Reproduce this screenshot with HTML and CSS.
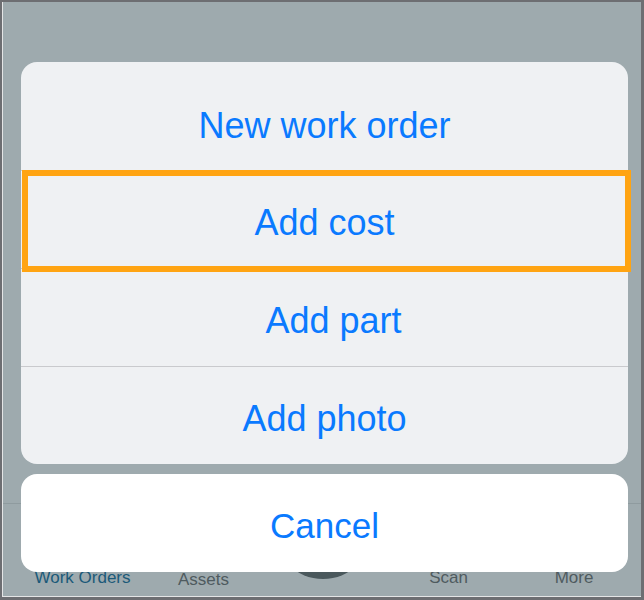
FILE: index.html
```html
<!DOCTYPE html>
<html>
<head>
<meta charset="utf-8">
<link rel="stylesheet" href="styles.css">
</head>
<body>
<div class="screen">
  <div class="content"></div>
  <nav class="tabbar">
    <span class="tab tab-active">Work Orders</span>
    <span class="tab tab-low">Assets</span>
    <span class="tab-circle"></span>
    <span class="tab">Scan</span>
    <span class="tab">More</span>
  </nav>
  <div class="overlay">
    <div class="sheet">
      <div class="row row-first">New work order</div>
      <div class="row">Add cost</div>
      <div class="row row-shift">Add part</div>
      <div class="row">Add photo</div>
      <div class="focus"></div>
    </div>
    <div class="cancel">Cancel</div>
  </div>
</div>
</body>
</html>
```
FILE: styles.css
```css
html, body {
  margin: 0;
  padding: 0;
  background: #6d6e72;
  width: 644px;
  height: 600px;
  overflow: hidden;
  font-family: "Liberation Sans", Arial, sans-serif;
}

.screen {
  position: relative;
  box-sizing: border-box;
  margin: 2px 3px 3px 2px;
  height: 595px;
  background: #9eaaae;
  border-left: 1px solid #e4e5e6;
  border-bottom: 1px solid #e4e5e6;
  display: flex;
  flex-direction: column;
}

.content {
  flex: 1;
}

.tabbar {
  box-sizing: border-box;
  height: 93px;
  border-top: 1px solid #8f9b9f;
  display: grid;
  grid-template-columns: 130px 112px 126px 126px 125px;
  grid-template-rows: 92px;
  padding-left: 14.5px;
  align-items: end;
  justify-items: center;
}

.tab {
  font-size: 17px;
  line-height: 20px;
  color: #4f5b5f;
  padding-bottom: 8px;
  white-space: nowrap;
}

.tab-active {
  color: #1b5a79;
}

.tab-low {
  padding-bottom: 6px;
}

.tab-circle {
  width: 100px;
  height: 100px;
  border-radius: 50%;
  background: #4a585c;
  margin-bottom: 17px;
}

.overlay {
  position: absolute;
  top: 0;
  left: 0;
  right: 0;
  padding: 60px 13px 0 18px;
}

.sheet {
  position: relative;
  background: #eff1f3;
  border-radius: 16px;
  padding-top: 11px;
}

.row {
  box-sizing: border-box;
  height: 97px;
  display: flex;
  align-items: center;
  justify-content: center;
  font-size: 36px;
  color: #0a7aff;
  padding-top: 6px;
  border-top: 1px solid #c9cacd;
}

.row-first {
  height: 97px;
  border-top: none;
  padding-top: 8px;
}

.row + .row {
  height: 98px;
}

.row-shift {
  padding-left: 18px;
}

.focus {
  position: absolute;
  box-sizing: border-box;
  left: 1px;
  top: 108px;
  width: 609px;
  height: 102px;
  border: 6px solid #ffa412;
}

.cancel {
  margin-top: 10px;
  height: 98px;
  background: #ffffff;
  border-radius: 16px;
  display: flex;
  align-items: center;
  justify-content: center;
  font-size: 35px;
  color: #0a7aff;
  padding-top: 5px;
  box-sizing: border-box;
}
```
